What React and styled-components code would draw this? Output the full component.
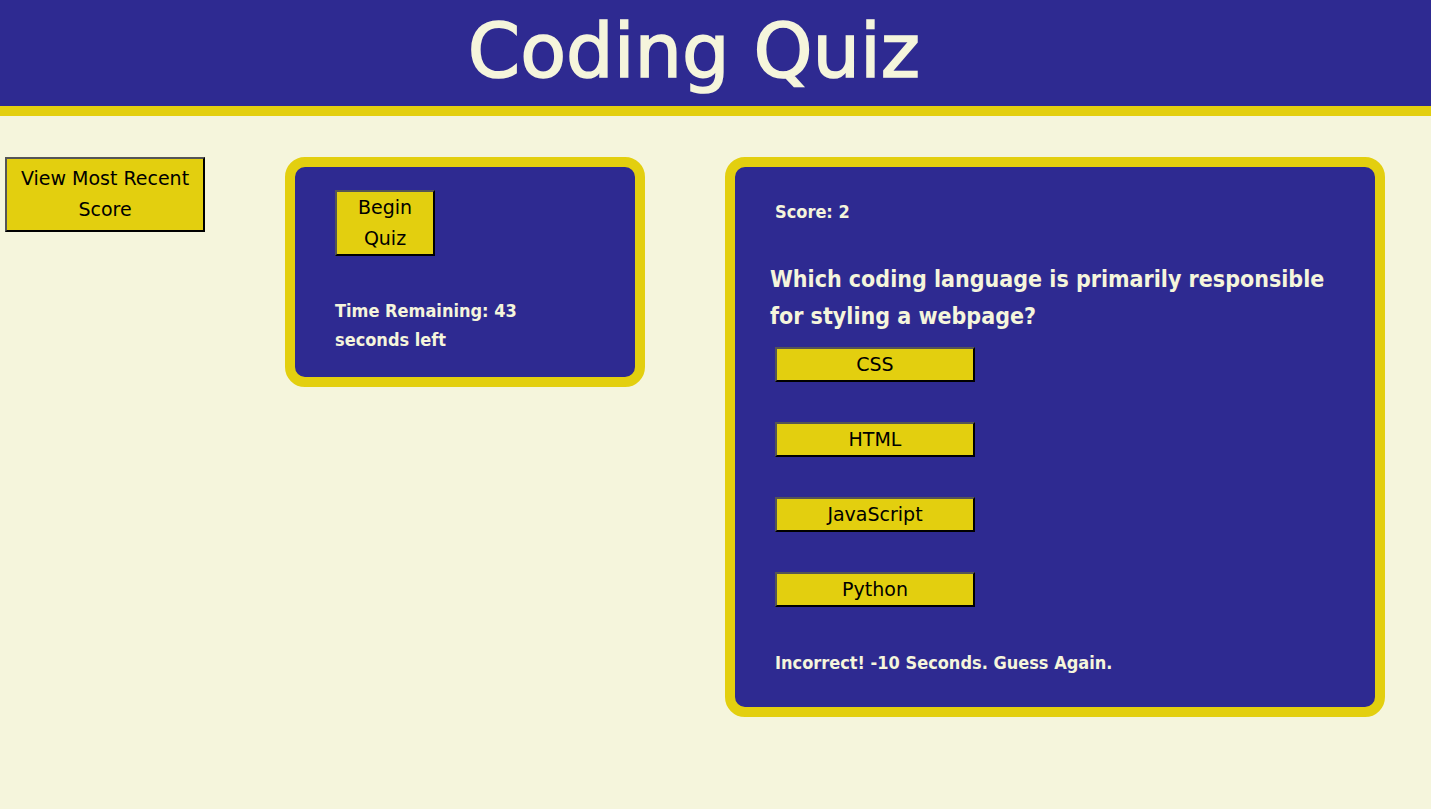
import React from "react";
import styled, { createGlobalStyle } from "styled-components";

const GlobalStyle = createGlobalStyle`
  body {
    margin: 0;
    background-color: #f5f5dc;
    font-family: "DejaVu Sans", "Open Sans", sans-serif;
  }
`;

const Header = styled.header`
  background-color: #2e2a91;
  border-bottom: 10px solid #e3cf0f;
  height: 106px;
  display: flex;
  justify-content: center;
  align-items: center;
  padding-right: 43px;
  h1 {
    margin: 0;
    color: #f5f5dc;
    font-size: 75px;
    font-weight: 400;
    line-height: 1;
    -webkit-text-stroke: 1.6px #f5f5dc;
    transform: translateY(-2px);
  }
`;

const Main = styled.main`
  display: flex;
  align-items: flex-start;
  gap: 80px;
  padding: 41px 0 0 5px;
`;

const YellowButton = styled.button`
  background-color: #e3cf0f;
  color: #000;
  font-family: "DejaVu Sans", sans-serif;
  font-size: 19px;
  line-height: 31px;
  border: 2px outset #555;
  border-right-color: #000;
  border-bottom-color: #000;
  padding: ${(p) => p.$pad || "0"};
  width: ${(p) => p.$width || 200}px;
  cursor: pointer;
`;

const AnswerButton = styled(YellowButton)`
  display: block;
`;

const Card = styled.section`
  background-color: #2e2a91;
  border: 10px solid #e3cf0f;
  border-radius: 20px;
  box-sizing: border-box;
  width: ${(p) => p.$width}px;
  height: ${(p) => p.$height}px;
  padding: ${(p) => p.$padding};
  color: #f5f5dc;
`;

const InfoText = styled.p`
  margin: 0;
  font-family: "DejaVu Sans Condensed", "DejaVu Sans", sans-serif;
  font-weight: 700;
  font-size: 18px;
  line-height: 29px;
  max-width: ${(p) => (p.$narrow ? "220px" : "none")};
  margin-top: ${(p) => p.$top || 0}px;
`;

const Question = styled.h2`
  margin: 35px 0 12px -5px;
  font-family: "DejaVu Sans Condensed", "DejaVu Sans", sans-serif;
  font-size: 23px;
  line-height: 37px;
  font-weight: 700;
`;

const Answers = styled.div`
  display: flex;
  flex-direction: column;
  gap: 40px;
`;

export default function App() {
  const answers = ["CSS", "HTML", "JavaScript", "Python"];
  return (
    <>
      <GlobalStyle />
      <Header>
        <h1>Coding Quiz</h1>
      </Header>
      <Main>
        <YellowButton $width={200} $pad="4px 0 5px">
          View Most Recent Score
        </YellowButton>
        <Card $width={360} $height={230} $padding="23px 40px">
          <YellowButton $width={100}>Begin Quiz</YellowButton>
          <InfoText $narrow $top={40}>
            Time Remaining: 43 seconds left
          </InfoText>
        </Card>
        <Card $width={660} $height={560} $padding="30px 40px">
          <InfoText>Score: 2</InfoText>
          <Question>
            Which coding language is primarily responsible for styling a
            webpage?
          </Question>
          <Answers>
            {answers.map((a) => (
              <AnswerButton key={a}>{a}</AnswerButton>
            ))}
          </Answers>
          <InfoText $top={41}>Incorrect! -10 Seconds. Guess Again.</InfoText>
        </Card>
      </Main>
    </>
  );
}
